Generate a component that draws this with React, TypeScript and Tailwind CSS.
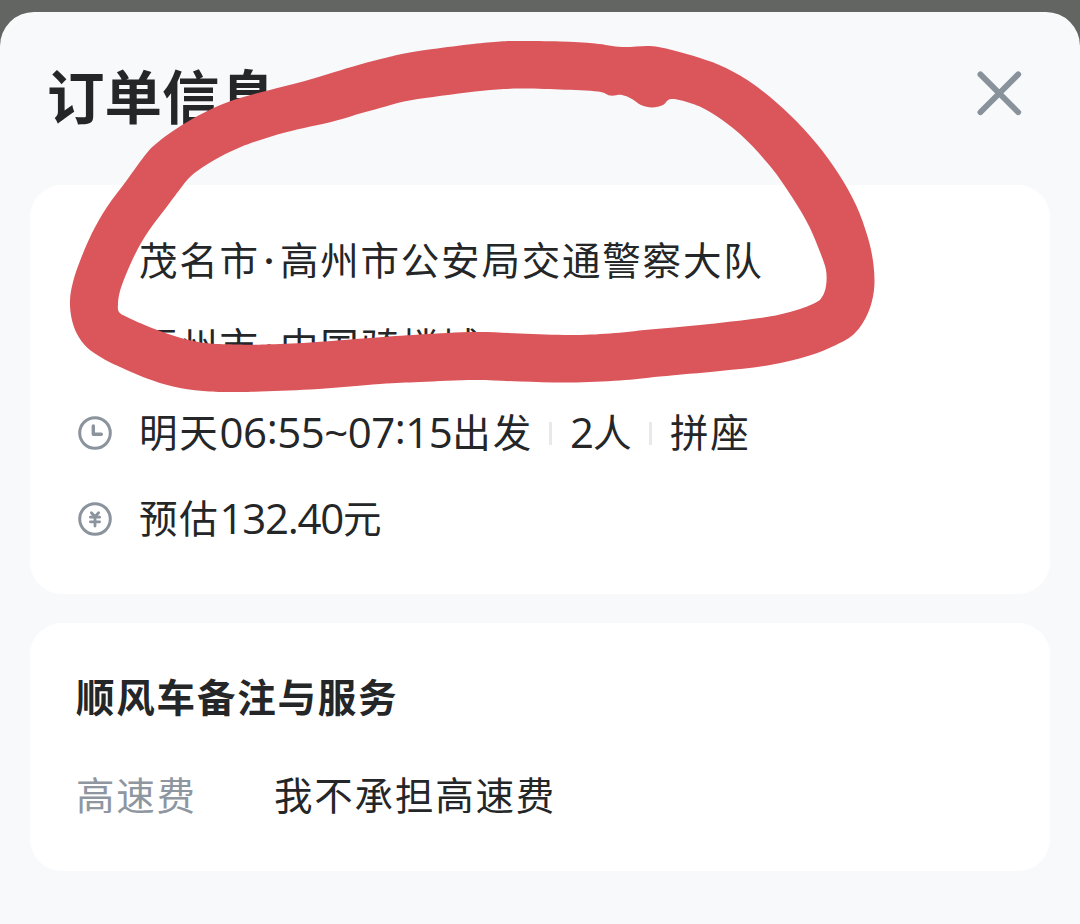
type Point = [number, number]

const OUTER: Point[] = [
  [520, 41], [560, 41.5], [595, 43.5], [622, 47], [650, 46], [672, 50], [700, 58], [726, 68], [756, 86], [790, 115],
  [816, 143], [838, 173], [856, 205], [868, 238], [873.5, 265], [874, 290], [868, 313], [855, 333],
  [836, 345], [808, 356], [770, 365], [720, 371], [660, 376.5], [620, 380.5], [570, 382.5], [520, 381.5], [475, 380], [420, 382],
  [380, 384], [310, 389.5], [240, 392], [203, 391], [173, 386.5], [147, 378.5], [120, 367], [103, 358.5], [87, 347.5],
  [77, 334], [71.5, 318], [70, 300], [73, 282], [80, 261], [92, 233], [107, 207], [127, 180], [146, 154],
  [157, 143], [173, 131], [193, 118.5], [218, 106], [240, 98], [268, 90.5], [303, 81.5], [333, 72.5], [360, 64.5],
  [387, 57.5], [407, 53], [433, 49], [473, 44], [500, 41.5],
]

const INNER: Point[] = [
  [520, 88.5], [560, 89.5], [598, 91.5], [610, 95.5], [622, 95], [632, 99], [641, 105], [652, 107.5],
  [663, 105], [671, 99], [690, 103], [710, 112], [740, 134], [770, 166], [792, 197], [809, 226],
  [820, 252], [826, 270], [826, 286], [822, 297], [814, 303.5], [790, 312], [760, 318], [700, 325],
  [650, 329.5], [610, 333.5], [570, 335], [520, 333.5], [475, 332], [420, 334.5], [370, 338],
  [310, 342.5], [265, 344.5], [237, 344.5], [210, 343.5], [193, 341], [173, 335.5], [147, 326], [127, 317], [119, 312], [118, 304],
  [120, 291], [127, 272], [138, 248.5], [150, 229], [167, 206.5], [182, 186.5], [190, 177],
  [200, 169], [217, 158.5], [234, 150], [254, 142], [287, 132], [333, 121.5], [360, 113.5], [380, 108],
  [404, 101.5], [433, 97], [467, 92.5], [497, 89.5],
]

// closed Catmull-Rom curve through every point
const smooth = (pts: Point[]) => {
  const n = pts.length
  let d = `M${pts[0][0]} ${pts[0][1]}`
  for (let i = 0; i < n; i++) {
    const a = pts[(i - 1 + n) % n]
    const b = pts[i]
    const c = pts[(i + 1) % n]
    const e = pts[(i + 2) % n]
    d += `C${b[0] + (c[0] - a[0]) / 6} ${b[1] + (c[1] - a[1]) / 6} ${c[0] - (e[0] - b[0]) / 6} ${c[1] - (e[1] - b[1]) / 6} ${c[0]} ${c[1]}`
  }
  return d + 'Z'
}

const Marker = () => (
  <svg className="absolute left-0 top-0 pointer-events-none" width="1080" height="924" viewBox="0 0 1080 924">
    <path d={smooth(OUTER) + smooth(INNER)} fill="#da565b" fillRule="evenodd" />
  </svg>
)

const ClockIcon = () => (
  <svg className="mt-1" width="34" height="34" viewBox="0 0 34 34" fill="none" stroke="#8b939d">
    <circle cx="17" cy="17" r="15.3" strokeWidth="3" />
    <path d="M15.3 10v8.2h8" strokeWidth="3.4" strokeLinecap="round" strokeLinejoin="round" />
  </svg>
)

const YuanIcon = () => (
  <svg className="mt-1" width="34" height="34" viewBox="0 0 34 34" fill="none" stroke="#8b939d">
    <circle cx="17" cy="17" r="15.3" strokeWidth="3" />
    <path d="M13.4 10.8l3.6 4 3.6-4M12.4 15.2h9.2M12.4 19.8h9.2M17 15v9" strokeWidth="2.8" strokeLinecap="round" />
  </svg>
)

const Divider = () => <div className="mt-1 w-[3px] h-[23px] bg-[#e8e9ea]" />

const Colon = () => <span className="inline-block -translate-y-1">:</span>

const App = () => {
  return (
    <div className="relative w-[1080px] h-[924px] overflow-hidden bg-[#636563] pt-3 font-['Noto_Sans_CJK_SC',sans-serif] text-[#242628]">
      <div className="h-[912px] rounded-t-[34px] bg-[#f7f9fb] px-[30px]">
        <header className="h-[173px] flex items-start justify-between pl-[17px] pr-7 pt-[49px]">
          <h1 className="text-[57.5px] leading-[66px] font-bold whitespace-nowrap">订单信息</h1>
          <button className="mt-[9px]">
            <svg width="46" height="46" viewBox="0 0 46 46" fill="none" stroke="#89919b" strokeWidth="5.8" strokeLinecap="round">
              <path d="M4.4 4.4l37.8 37.8M42.2 4.4L4.4 42.2" />
            </svg>
          </button>
        </header>

        <section className="h-[409px] rounded-[32px] bg-white pt-[30px] pl-12 text-[38.5px] tracking-[1.8px] whitespace-nowrap">
          <div className="h-[87px] flex items-center pl-[61px]">
            <span>茂名市</span>
            <span className="w-5 text-center font-['Lato','Noto_Sans_CJK_SC',sans-serif]">·</span>
            <span>高州市公安局交通警察大队</span>
          </div>
          <div className="h-[86px] flex items-center pl-[61px]">
            <span>梧州市</span>
            <span className="w-5 text-center font-['Lato','Noto_Sans_CJK_SC',sans-serif]">·</span>
            <span>中国骑楼城</span>
          </div>
          <div className="h-[86px] flex items-center">
            <ClockIcon />
            <div className="ml-[27px] w-[393px] flex items-center">
              <span>明天</span>
              <span className="font-['Open_Sans',sans-serif] text-[42px] tracking-[-0.5px]">
                06<Colon />55~07<Colon />15
              </span>
              <span>出发</span>
            </div>
            <div className="ml-[17px] flex items-center gap-[18px]">
              <Divider />
              <div className="w-[61px] flex items-center">
                <span className="font-['Open_Sans',sans-serif] text-[42px] tracking-[-1px]">2</span>
                <span>人</span>
              </div>
              <Divider />
              <span>拼座</span>
            </div>
          </div>
          <div className="h-[86px] flex items-center">
            <YuanIcon />
            <div className="ml-[27px] flex items-center">
              <span>预估</span>
              <span className="font-['Open_Sans',sans-serif] text-[42px] tracking-[-1.3px]">132.40</span>
              <span>元</span>
            </div>
          </div>
        </section>

        <section className="mt-[29px] h-[248px] rounded-[32px] bg-white pt-[43px] pl-[46px] text-[38.5px] tracking-[1.8px] whitespace-nowrap">
          <h2 className="h-[60px] flex items-center font-bold">顺风车备注与服务</h2>
          <div className="mt-[38px] h-[60px] flex items-center">
            <span className="w-[198px] text-[#8e96a0]">高速费</span>
            <span>我不承担高速费</span>
          </div>
        </section>
      </div>
      <Marker />
    </div>
  )
}

export default App
